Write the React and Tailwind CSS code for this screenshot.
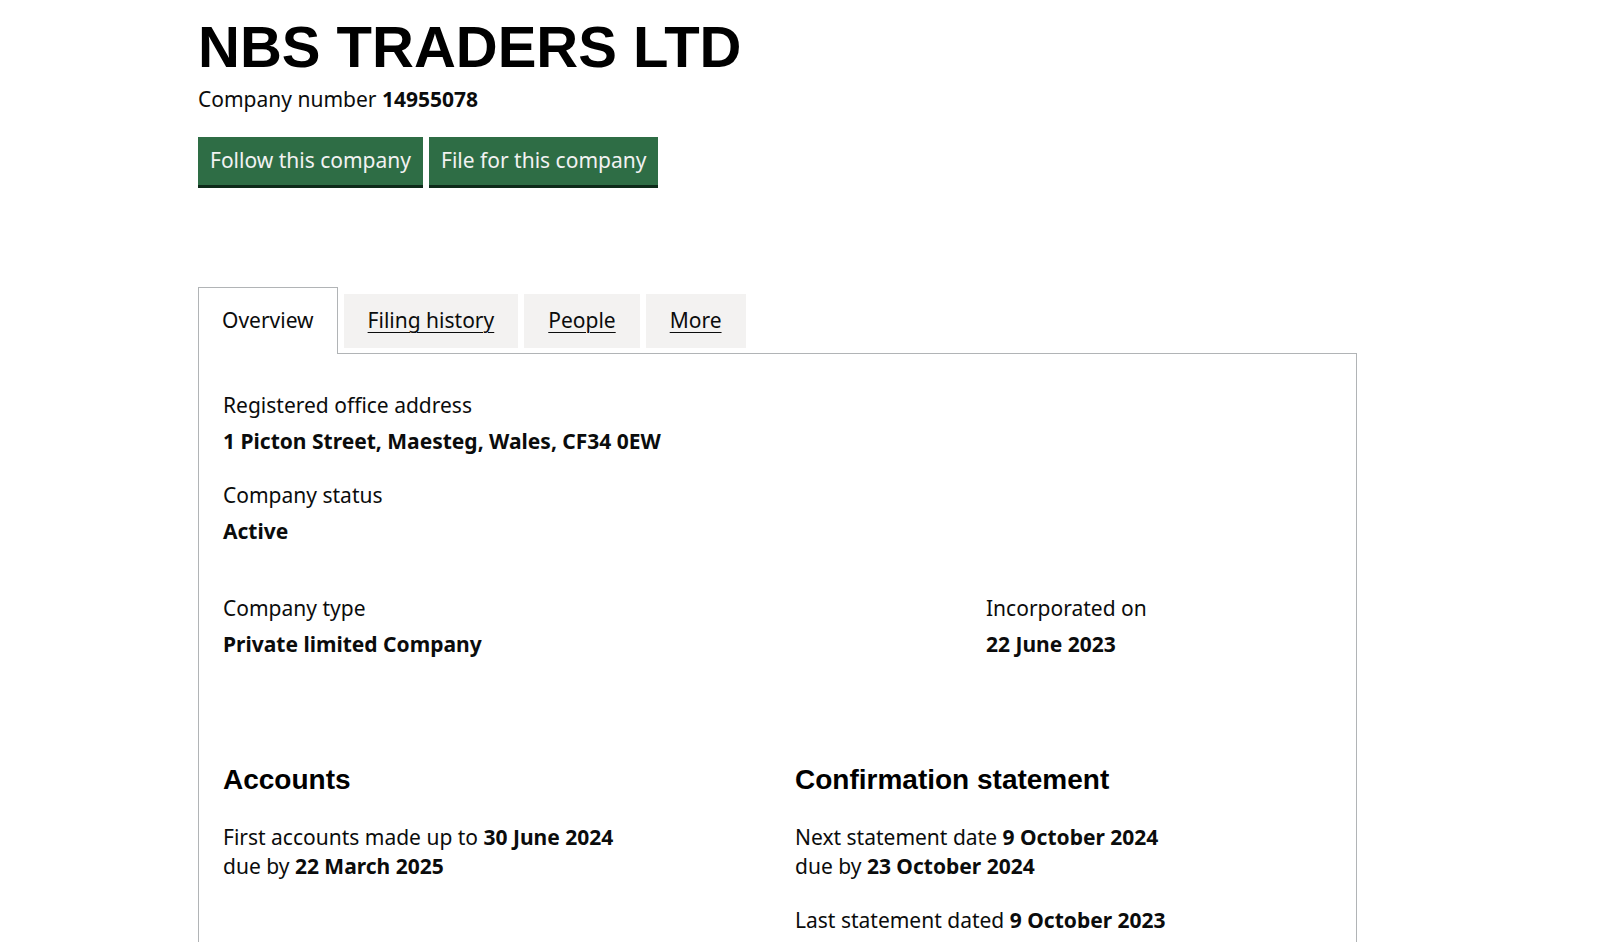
import React from 'react';

const body = "font-['Noto_Sans','Open_Sans',Arial,sans-serif]";
const head = "font-['Liberation_Sans',Arial,Helvetica,sans-serif]";

function Field({ label, value, className = '' }) {
  return (
    <div className={className}>
      <dt className="text-[21px] leading-[30px]">{label}</dt>
      <dd className="mt-[6px] text-[21px] leading-[30px] font-bold">{value}</dd>
    </div>
  );
}

function App() {
  const tabs = ['Filing history', 'People', 'More'];

  return (
    <div className={`min-h-screen bg-white text-[#0b0c0c] ${body}`}>
      <div className="pl-[198px] pt-[18px]">
        {/* Heading */}
        <h1 className={`${head} text-[58px] leading-[58px] font-bold text-black`}>NBS TRADERS LTD</h1>
        <p className="mt-[8px] text-[21px] leading-[30px]">
          Company number <strong className="font-bold">14955078</strong>
        </p>

        {/* Actions */}
        <div className="mt-[23px] flex gap-[6px]">
          <a className="h-[48px] px-[12px] flex items-center bg-[#2e6d45] text-[#f2f2f2] text-[21px] shadow-[0_3px_0_#0d2a19]">
            Follow this company
          </a>
          <a className="h-[48px] px-[12px] flex items-center bg-[#2e6d45] text-[#f2f2f2] text-[21px] shadow-[0_3px_0_#0d2a19]">
            File for this company
          </a>
        </div>

        {/* Tabs */}
        <div className="mt-[102px] w-[1159px]">
          <ul className="flex items-end gap-[6px] -mb-px relative z-10">
            <li className="h-[67px] px-[23px] flex items-center bg-white border border-b-0 border-[#b1b4b6] text-[21px]">
              Overview
            </li>
            {tabs.map((t) => (
              <li key={t} className="h-[54px] mb-[6px] px-[24px] flex items-center bg-[#f3f2f1] text-[21px] underline underline-offset-[4px] decoration-1">
                {t}
              </li>
            ))}
          </ul>

          {/* Panel */}
          <div className="border border-[#b1b4b6] border-b-0 px-[24px] pt-[36px] pb-[40px]">
            <dl>
              <Field label="Registered office address" value="1 Picton Street, Maesteg, Wales, CF34 0EW" />
              <Field className="mt-[24px]" label="Company status" value="Active" />
              <div className="mt-[47px] grid grid-cols-[763px_1fr]">
                <Field label="Company type" value="Private limited Company" />
                <Field label="Incorporated on" value="22 June 2023" />
              </div>
            </dl>

            <div className="mt-[104px] grid grid-cols-[572px_1fr]">
              <section>
                <h2 className={`${head} text-[28px] leading-[34px] font-bold text-black`}>Accounts</h2>
                <p className="mt-[26px] text-[21px] leading-[29px]">
                  First accounts made up to <strong>30 June 2024</strong>
                  <br />
                  due by <strong>22 March 2025</strong>
                </p>
              </section>
              <section>
                <h2 className={`${head} text-[28px] leading-[34px] font-bold text-black`}>Confirmation statement</h2>
                <p className="mt-[26px] text-[21px] leading-[29px]">
                  Next statement date <strong>9 October 2024</strong>
                  <br />
                  due by <strong>23 October 2024</strong>
                </p>
                <p className="mt-[25px] text-[21px] leading-[29px]">
                  Last statement dated <strong>9 October 2023</strong>
                </p>
              </section>
            </div>
          </div>
        </div>
      </div>
    </div>
  );
}

export default App;
